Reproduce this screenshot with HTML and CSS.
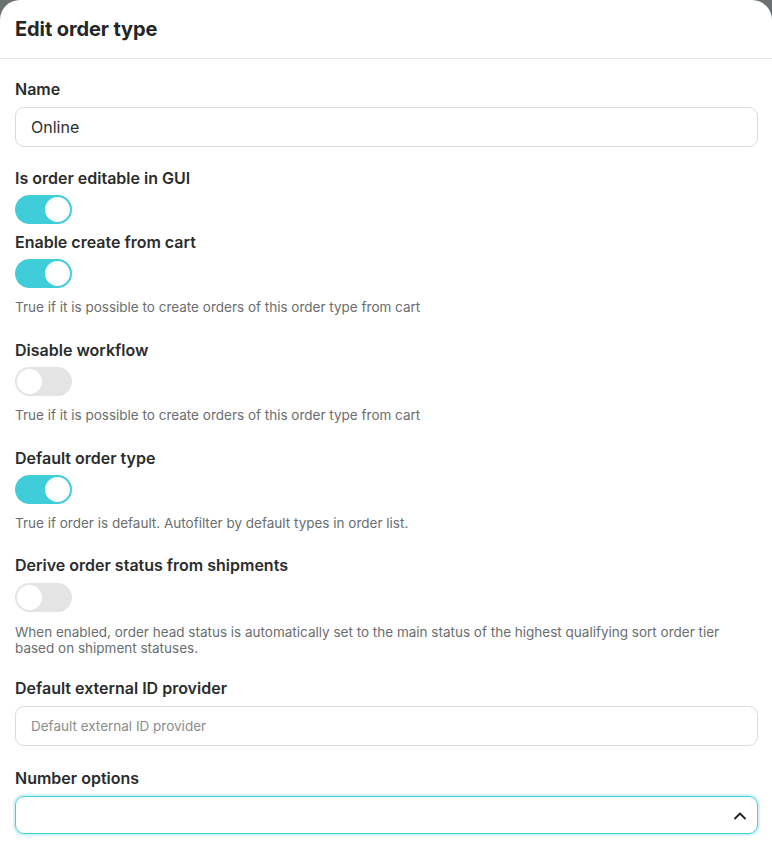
FILE: index.html
```html
<!DOCTYPE html>
<html lang="en">
<head>
<meta charset="utf-8">
<title>Edit order type</title>
<link rel="stylesheet" href="styles.css">
</head>
<body>
<div class="sheet">
  <header class="sheet-header">
    <h1 class="sheet-title">Edit order type</h1>
  </header>
  <form class="sheet-body">
    <div class="field field-input">
      <label class="field-label">Name</label>
      <div class="text-input"><span class="input-value">Online</span></div>
    </div>

    <div class="field field-tight">
      <label class="field-label label-toggle">Is order editable in GUI</label>
      <span class="toggle on"><span class="knob"></span></span>
    </div>

    <div class="field field-help">
      <label class="field-label label-toggle">Enable create from cart</label>
      <span class="toggle on"><span class="knob"></span></span>
      <p class="help">True if it is possible to create orders of this order type from cart</p>
    </div>

    <div class="field field-help">
      <label class="field-label label-toggle">Disable workflow</label>
      <span class="toggle"><span class="knob"></span></span>
      <p class="help">True if it is possible to create orders of this order type from cart</p>
    </div>

    <div class="field field-help field-help-short">
      <label class="field-label label-toggle">Default order type</label>
      <span class="toggle on"><span class="knob"></span></span>
      <p class="help">True if order is default. Autofilter by default types in order list.</p>
    </div>

    <div class="field field-help field-long">
      <label class="field-label label-toggle">Derive order status from shipments</label>
      <span class="toggle"><span class="knob"></span></span>
      <p class="help">When enabled, order head status is automatically set to the main status of the highest qualifying sort order tier based on shipment statuses.</p>
    </div>

    <div class="field field-input field-input-wide">
      <label class="field-label">Default external ID provider</label>
      <div class="text-input"><span class="placeholder">Default external ID provider</span></div>
    </div>

    <div class="field">
      <label class="field-label">Number options</label>
      <div class="select-input focused">
        <span class="select-value"></span>
        <svg class="chevron" width="14" height="14" viewBox="0 0 14 14" aria-hidden="true"><path d="M2 9.5 L7 4.5 L12 9.5" fill="none" stroke="#222" stroke-width="1.8" stroke-linecap="round" stroke-linejoin="round"/></svg>
      </div>
    </div>
  </form>
</div>
</body>
</html>
```

FILE: styles.css
```css
html, body {
  margin: 0;
  padding: 0;
}
body {
  background: #6b7171;
  font-family: "Inter", "Noto Sans", sans-serif;
  color: #2a2c2c;
}
.sheet {
  background: #ffffff;
  border-radius: 20px 20px 0 0;
  min-height: 852px;
  box-sizing: border-box;
}
.sheet-header {
  height: 58px;
  border-bottom: 1px solid #e3e6e6;
  display: flex;
  align-items: center;
  padding: 0 15px;
}
.sheet-title {
  margin: 0;
  font-size: 20px;
  font-weight: 700;
  color: #232626;
  letter-spacing: -0.1px;
}
.sheet-body {
  padding: 20px 14px 0 15px;
  display: flex;
  flex-direction: column;
}
.field {
  display: flex;
  flex-direction: column;
  align-items: flex-start;
}
.field-input {
  margin-bottom: 21px;
}
.field-input-wide {
  margin-bottom: 22px;
}
.field-tight {
  margin-bottom: 8px;
}
.field-help {
  margin-bottom: 25px;
}
.field-help-short {
  margin-bottom: 24px;
}
.field-long {
  margin-bottom: 22px;
}
.field-label {
  font-size: 16px;
  line-height: 20px;
  font-weight: 600;
  color: #2b2d2d;
  margin-bottom: 8px;
}
.label-toggle {
  margin-bottom: 7px;
}
.field-long .label-toggle {
  margin-bottom: 8px;
}
.field-long .help {
  margin-top: 12px;
}
.text-input {
  align-self: stretch;
  height: 40px;
  box-sizing: border-box;
  border: 1px solid #d8dcdd;
  border-radius: 9px;
  display: flex;
  align-items: center;
  padding: 0 15px;
}
.input-value {
  font-size: 16px;
  color: #2e3030;
}
.placeholder {
  font-size: 13.5px;
  color: #8a8d8e;
}
.select-input {
  align-self: stretch;
  height: 38px;
  box-sizing: border-box;
  border: 1px solid #40cdda;
  border-radius: 9px;
  box-shadow: 0 0 0 2px rgba(64, 205, 218, 0.22);
  display: flex;
  align-items: center;
  justify-content: space-between;
  padding: 2px 10px 0 15px;
}
.chevron {
  display: block;
}
.toggle {
  width: 57px;
  height: 29px;
  border-radius: 15px;
  background: #e4e4e4;
  display: flex;
  align-items: center;
  padding: 0 2px;
  box-sizing: border-box;
}
.toggle .knob {
  width: 25px;
  height: 25px;
  border-radius: 50%;
  background: #ffffff;
}
.toggle.on {
  background: #40cdda;
  justify-content: flex-end;
}
.help {
  margin: 11px 0 0;
  font-size: 13.5px;
  line-height: 16px;
  color: #6a6e6f;
}
```
